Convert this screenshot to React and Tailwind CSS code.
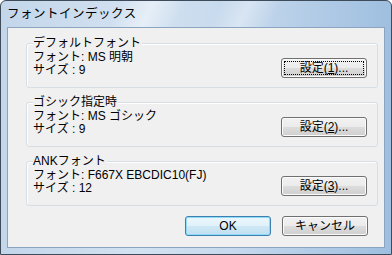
const FONT = "font-['Liberation_Sans','Noto_Sans_CJK_JP',sans-serif]";

function VistaButton({ children, focused = false, isDefault = false }) {
  const frame = isDefault
    ? 'border-[#3c7fb1] shadow-[inset_0_0_0_1px_#8fdcf9] bg-[linear-gradient(#eaf6fd_0%,#e1f2fb_50%,#cfe8f5_50%,#bfdff0_100%)]'
    : 'border-[#707070] shadow-[inset_0_0_0_1px_#fbfbfb] bg-[linear-gradient(#f2f2f2_0%,#ebebeb_50%,#dddddd_50%,#cfcfcf_100%)]';
  return (
    <button className={`w-[86px] h-[20px] rounded-[3px] border p-[2px] flex ${frame}`}>
      <span
        className={`flex-1 flex items-center justify-center text-[12px] leading-none text-black ${
          focused ? 'border border-dotted border-black' : 'border border-transparent'
        }`}
      >
        {children}
      </span>
    </button>
  );
}

function SetButton({ n, focused }) {
  return (
    <VistaButton focused={focused}>
      設定(<span className="underline underline-offset-1">{n}</span>)...
    </VistaButton>
  );
}

function Group({ title, font, size, n, focused }) {
  return (
    <div className="border border-[#d5dfe5] rounded-[3px] shadow-[inset_1px_1px_0_#ffffff] h-[45px] pl-[6px] pr-[10px]">
      <div className="-mt-[8px] w-fit bg-[#f0f0f0] pr-[1px] leading-[14px]">{title}</div>
      <div className="flex items-end justify-between mt-[1px]">
        <div className="leading-[13px]">
          <div>フォント: {font}</div>
          <div>サイズ : {size}</div>
        </div>
        <div className="mb-[-1px]">
          <SetButton n={n} focused={focused} />
        </div>
      </div>
    </div>
  );
}

export default function App() {
  return (
    <div className={`w-[392px] h-[255px] flex flex-col border border-[#3d4b5a] rounded-t-[6px] bg-[linear-gradient(90deg,#c3d6ea_0%,#d3e2f1_35%,#c6d9ed_60%,#9fbfe0_100%)] text-[12px] text-black ${FONT}`}>
      {/* title bar — glass streaks */}
      <div className="h-[26px] flex items-center pl-[6px] tracking-[0.5px] text-[12.5px] text-black bg-[linear-gradient(115deg,transparent_30%,rgba(255,255,255,0.45)_38%,transparent_46%,transparent_55%,rgba(255,255,255,0.35)_62%,transparent_70%)]">
        フォントインデックス
      </div>

      {/* client area */}
      <div className="flex-1 mx-[6px] mb-[6px] border border-[#8ba5c0] bg-[#f0f0f0] flex flex-col pl-[18px] pr-[6px] pt-[15px]">
        <Group title="デフォルトフォント" font="MS 明朝" size="9" n="1" focused />
        <div className="h-[14px]" />
        <Group title="ゴシック指定時" font="MS ゴシック" size="9" n="2" />
        <div className="h-[14px]" />
        <Group title="ANKフォント" font="F667X EBCDIC10(FJ)" size="12" n="3" />

        <div className="flex justify-end gap-[11px] pr-[10px] mt-[10px]">
          <VistaButton isDefault>OK</VistaButton>
          <VistaButton>キャンセル</VistaButton>
        </div>
      </div>
    </div>
  );
}
